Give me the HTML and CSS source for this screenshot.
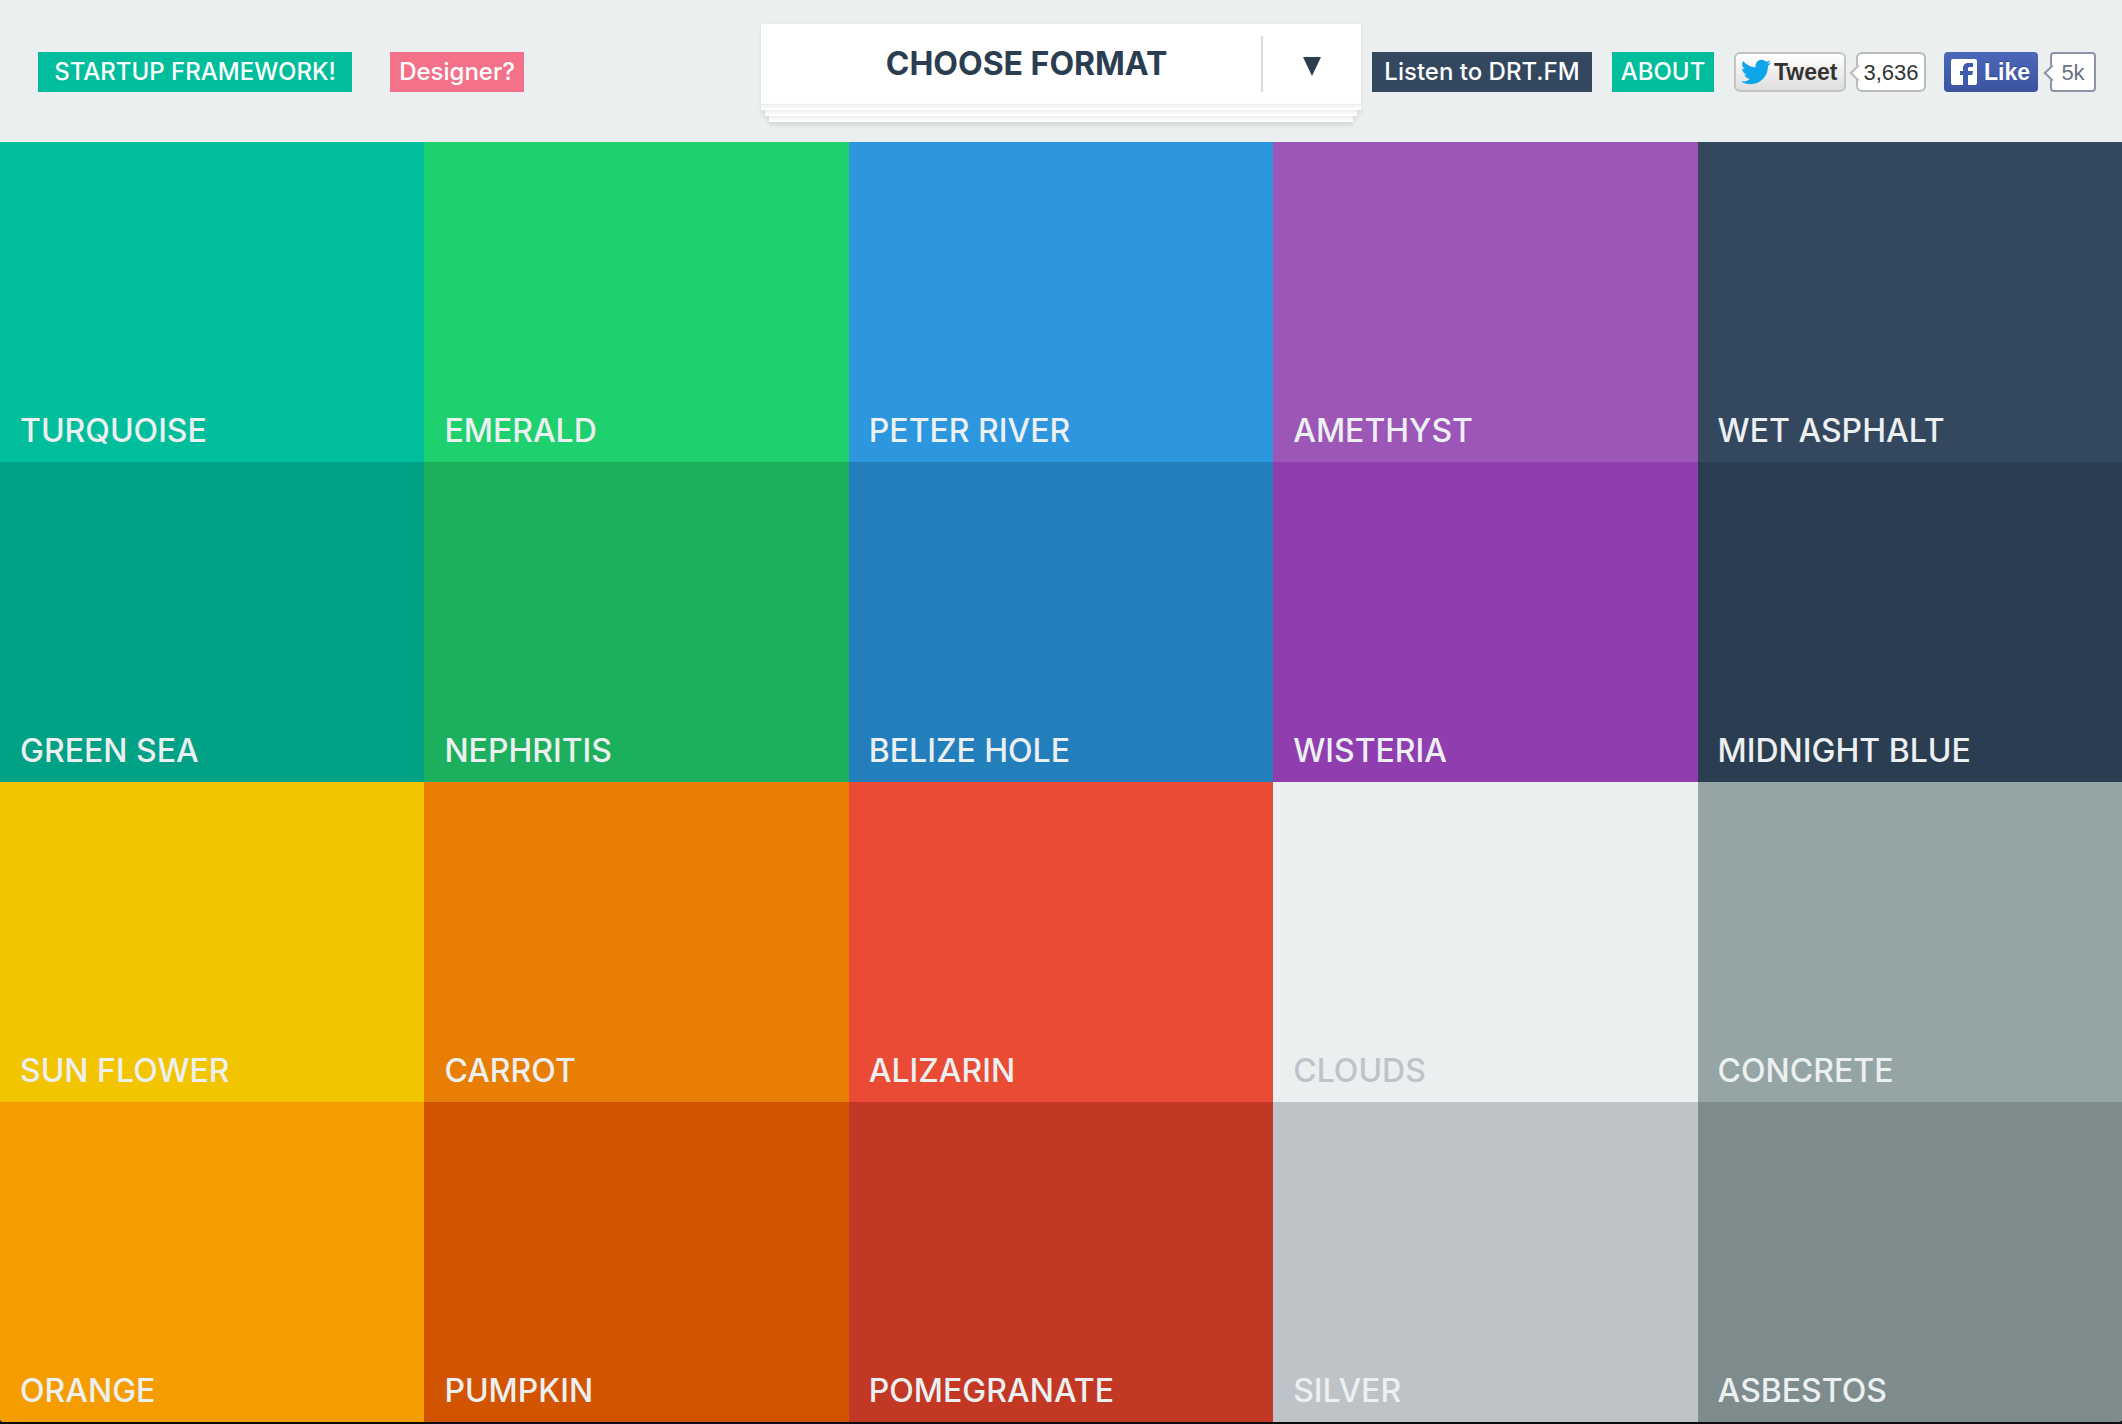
FILE: index.html
```html
<!DOCTYPE html>
<html lang="en">
<head>
<meta charset="utf-8">
<title>Flat UI Colors</title>
<link rel="stylesheet" href="styles.css">
</head>
<body>
<div class="page">
  <header class="header">
    <nav class="links">
      <a class="tag tag-framework" href="#">STARTUP FRAMEWORK!</a>
      <a class="tag tag-designer" href="#">Designer?</a>
    </nav>
    <div class="format">
      <div class="format-field">
        <select class="format-select" aria-label="Choose format">
          <option>CHOOSE FORMAT</option>
          <option>HEX</option>
          <option>RGB</option>
        </select>
        <span class="format-arrow">
          <svg width="18" height="19" viewBox="0 0 18 19" aria-hidden="true"><path d="M0 0h18L9 19z" fill="#2b3e51"/></svg>
        </span>
      </div>
      <div class="sheet"></div>
      <div class="sheet sheet-second"></div>
      <div class="sheet sheet-third"></div>
    </div>
    <div class="social">
      <a class="tag tag-listen" href="#">Listen to DRT.FM</a>
      <a class="tag tag-about" href="#">ABOUT</a>
      <div class="share share-twitter">
        <button class="tweet" type="button">
          <svg class="bird" width="30" height="26" viewBox="0 2 24 20" aria-hidden="true"><path fill="#0fa5ea" d="M23.954 4.569c-.885.389-1.83.654-2.825.775 1.014-.611 1.794-1.574 2.163-2.723-.951.555-2.005.959-3.127 1.184-.896-.959-2.173-1.559-3.591-1.559-2.717 0-4.92 2.203-4.92 4.917 0 .39.045.765.127 1.124C7.691 8.094 4.066 6.13 1.64 3.161c-.427.722-.666 1.561-.666 2.475 0 1.71.87 3.213 2.188 4.096-.807-.026-1.566-.248-2.228-.616v.061c0 2.385 1.693 4.374 3.946 4.827-.413.111-.849.171-1.296.171-.314 0-.615-.03-.916-.086.631 1.953 2.445 3.377 4.604 3.417-1.68 1.319-3.809 2.105-6.102 2.105-.39 0-.779-.023-1.17-.067 2.189 1.394 4.768 2.209 7.557 2.209 9.054 0 13.999-7.496 13.999-13.986 0-.209 0-.42-.015-.63.961-.689 1.8-1.56 2.46-2.548l-.047-.02z"/></svg>
          Tweet
        </button>
        <a class="count" href="#">3,636</a>
      </div>
      <div class="share share-facebook">
        <button class="like" type="button">
          <svg width="26" height="26" viewBox="0 0 26 26" aria-hidden="true"><rect width="26" height="26" rx="2" fill="#fff"/><path fill="#3f5bab" d="M12 26V16H9v-4h3V9.500C12 6 14 4 17.500 4H22v4h-3c-1.600 0-2 .6-2 2v2h5l-.6 4H17v10z"/></svg>
          Like
        </button>
        <a class="count" href="#">5k</a>
      </div>
    </div>
  </header>
  <main class="palette">
    <button class="swatch turquoise" type="button">TURQUOISE</button>
    <button class="swatch emerald" type="button">EMERALD</button>
    <button class="swatch peter-river" type="button">PETER RIVER</button>
    <button class="swatch amethyst" type="button">AMETHYST</button>
    <button class="swatch wet-asphalt" type="button">WET ASPHALT</button>
    <button class="swatch green-sea" type="button">GREEN SEA</button>
    <button class="swatch nephritis" type="button">NEPHRITIS</button>
    <button class="swatch belize-hole" type="button">BELIZE HOLE</button>
    <button class="swatch wisteria" type="button">WISTERIA</button>
    <button class="swatch midnight-blue" type="button">MIDNIGHT BLUE</button>
    <button class="swatch sun-flower" type="button">SUN FLOWER</button>
    <button class="swatch carrot" type="button">CARROT</button>
    <button class="swatch alizarin" type="button">ALIZARIN</button>
    <button class="swatch clouds" type="button">CLOUDS</button>
    <button class="swatch concrete" type="button">CONCRETE</button>
    <button class="swatch orange" type="button">ORANGE</button>
    <button class="swatch pumpkin" type="button">PUMPKIN</button>
    <button class="swatch pomegranate" type="button">POMEGRANATE</button>
    <button class="swatch silver" type="button">SILVER</button>
    <button class="swatch asbestos" type="button">ASBESTOS</button>
  </main>
</div>
</body>
</html>
```
FILE: styles.css
```css
* {
  box-sizing: border-box;
}

body {
  margin: 0;
  padding-bottom: 2px;
  background: #0c0c0c;
  font-family: Inter, "Open Sans", sans-serif;
}

button,
select {
  margin: 0;
  border: 0;
  font-family: inherit;
  cursor: pointer;
}

a {
  text-decoration: none;
}

.page {
  overflow: hidden;
  border-radius: 0 0 4px 4px;
  background: #ebeff0;
}

/* Header */

.header {
  display: grid;
  grid-template-columns: 1fr 600px 1fr;
  height: 142px;
}

.links {
  display: flex;
  align-items: flex-start;
  gap: 38px;
  padding: 52px 0 0 38px;
}

.tag {
  height: 40px;
  padding: 0 8px;
  color: #fff;
  font-size: 24px;
  font-weight: 500;
  line-height: 40px;
  text-align: center;
  white-space: nowrap;
}

.tag-framework {
  min-width: 314px;
  background: #00be9c;
}

.tag-designer {
  min-width: 134px;
  background: #f47289;
}

.tag-listen {
  min-width: 220px;
  background: #33475e;
}

.tag-about {
  min-width: 102px;
  margin-right: 20px;
  margin-left: 20px;
  background: #00be9c;
}

.format {
  padding-top: 24px;
}

.format-field {
  position: relative;
}

.format-select {
  display: block;
  width: 100%;
  height: 80px;
  padding: 0 99px 2px 30px;
  border-radius: 0;
  appearance: none;
  background: #fff;
  box-shadow: 0 1px 3px rgba(0, 0, 0, 0.1);
  color: #2b3e51;
  font-size: 32px;
  font-weight: 700;
  text-align: center;
}

.format-arrow {
  position: absolute;
  top: 12px;
  right: 0;
  display: flex;
  align-items: center;
  justify-content: center;
  width: 100px;
  height: 56px;
  padding-top: 4px;
  border-left: 2px solid #ddd;
  pointer-events: none;
}

/* The stack of paper edges below the select */

.sheet {
  position: relative;
  height: 6px;
  background: linear-gradient(#ececec, #fff 80%);
  box-shadow: 0 3px 4px rgba(0, 0, 0, 0.1);
}

.sheet-second {
  margin: 0 4px;
}

.sheet-third {
  margin: 0 8px;
}

.social {
  display: flex;
  align-items: flex-start;
  justify-content: flex-end;
  padding: 52px 26px 0 0;
}

.share {
  display: flex;
  font-family: "Liberation Sans", Arial, sans-serif;
}

.share-twitter {
  gap: 10px;
  margin-right: 18px;
}

.share-facebook {
  gap: 12px;
}

.tweet,
.like {
  display: flex;
  align-items: center;
  height: 40px;
  font-size: 23px;
  font-weight: 700;
}

.tweet {
  width: 112px;
  padding: 0 0 0 5px;
  gap: 3px;
  border: 2px solid #c4c4c4;
  border-radius: 6px;
  background: linear-gradient(#fff, #dedede);
  color: #333;
}

.like {
  width: 94px;
  padding: 0 0 0 7px;
  gap: 7px;
  border-radius: 4px;
  background: linear-gradient(#4c68ba, #3b54a0);
  color: #fff;
  text-shadow: 0 -1px 0 #354c8c;
}

.count {
  position: relative;
  height: 40px;
  border: 2px solid #bbb;
  border-radius: 6px;
  background: #fff;
  color: #333;
  font-size: 22px;
  line-height: 37px;
  text-align: center;
}

.count::before {
  position: absolute;
  top: 13px;
  left: -6px;
  width: 10px;
  height: 10px;
  border: solid #bbb;
  border-width: 0 0 2px 2px;
  background: #fff;
  content: "";
  transform: rotate(45deg);
}

.share-twitter .count {
  width: 70px;
}

.share-facebook .count {
  width: 46px;
  border-color: #8c94a5;
  border-radius: 4px;
  color: #6a7180;
}

.share-facebook .count::before {
  border-color: #8c94a5;
}

/* Palette */

.palette {
  display: grid;
  grid-template-columns: repeat(5, 1fr);
  grid-auto-rows: 320px;
}

.swatch {
  display: flex;
  align-items: flex-end;
  padding: 0 20px 15px;
  color: #ecf0f1;
  font-size: 32px;
  font-weight: 500;
  line-height: 32px;
  text-align: left;
}

.turquoise { background: #00be9c; }
.emerald { background: #1fd06e; }
.peter-river { background: #2c96df; }
.amethyst { background: #9c56b8; }
.wet-asphalt { background: #33475e; }
.green-sea { background: #00a185; }
.nephritis { background: #1caf5d; }
.belize-hole { background: #227fbc; }
.wisteria { background: #8f3daf; }
.midnight-blue { background: #2b3d51; }
.sun-flower { background: #f3c500; }
.carrot { background: #e87e04; }
.alizarin { background: #ea4b35; }
.clouds { background: #ebeff0; color: #bec3c7; }
.concrete { background: #95a5a5; }
.orange { background: #f59d00; }
.pumpkin { background: #d35400; }
.pomegranate { background: #c23824; }
.silver { background: #bec3c7; }
.asbestos { background: #7e8c8d; }
```
